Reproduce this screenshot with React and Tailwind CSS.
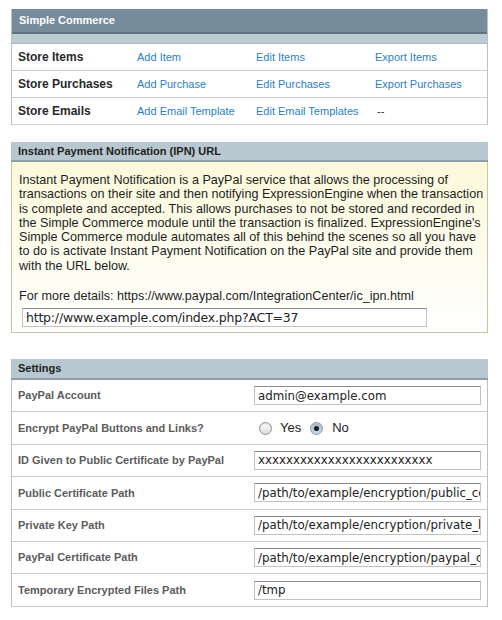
import React from 'react';

const storeRows = [
    { label: 'Store Items', links: ['Add Item', 'Edit Items', 'Export Items'] },
    { label: 'Store Purchases', links: ['Add Purchase', 'Edit Purchases', 'Export Purchases'] },
    { label: 'Store Emails', links: ['Add Email Template', 'Edit Email Templates', null] },
];

const settings = [
    { label: 'PayPal Account', value: 'admin@example.com' },
    { label: 'Encrypt PayPal Buttons and Links?', radio: true },
    { label: 'ID Given to Public Certificate by PayPal', value: 'xxxxxxxxxxxxxxxxxxxxxxxxx' },
    { label: 'Public Certificate Path', value: '/path/to/example/encryption/public_certificate.pem' },
    { label: 'Private Key Path', value: '/path/to/example/encryption/private_key.pem' },
    { label: 'PayPal Certificate Path', value: '/path/to/example/encryption/paypal_certificate.pem' },
    { label: 'Temporary Encrypted Files Path', value: '/tmp' },
];

const TextBox = ({ value, className = '' }) => (
    <input
        type="text"
        readOnly
        value={value}
        className={`block h-[19px] bg-white border border-[#c2c2c2] border-t-[#8c8c8c] pl-[3px] pr-0 py-0 outline-none text-[#222] font-['DejaVu_Sans',sans-serif] ${className}`}
    />
);

const Radio = ({ checked }) => (
    <span className="relative inline-flex items-center justify-center w-[13px] h-[13px] rounded-full border border-[#8e8e8e] bg-gradient-to-b from-[#ffffff] to-[#dcdcdc] shadow-[inset_0_1px_1px_rgba(0,0,0,0.15)]">
        {checked && (
            <span className="absolute inset-0 rounded-full bg-gradient-to-b from-[#9fb6d0] to-[#c9d8ea] flex items-center justify-center">
                <span className="w-[5px] h-[5px] rounded-full bg-[#1c1c1c]" />
            </span>
        )}
    </span>
);

const App = () => {
    return (
        <div className="w-[502px] h-[620px] bg-white pt-[9px] font-['Liberation_Sans',Arial,sans-serif]">
            <div className="ml-[11px] w-[477px]">
                {/* Simple Commerce */}
                <div className="border-l border-r border-[#b9c0ca]">
                    <div className="h-[25px] bg-[#768c9b] border-b-2 border-[#5e7484] pl-[7px] flex items-center text-white font-bold text-[11px]">
                        Simple Commerce
                    </div>
                    <div className="h-[10px] bg-[#bccad2] border-b border-[#a9b8c1]" />
                    {storeRows.map((row) => (
                        <div key={row.label} className="h-[27px] grid grid-cols-[119px_119px_119px_1fr] items-center border-b border-[#c9ced8] pl-[6px]">
                            <div className="font-bold text-[12px] text-[#2a2a2a]">{row.label}</div>
                            {row.links.map((link, i) => (
                                <div key={i} className="text-[11px]">
                                    {link ? <a className="text-[#2a7fc6]">{link}</a> : <span className="text-[#333] pl-[2px]">--</span>}
                                </div>
                            ))}
                        </div>
                    ))}
                </div>

                {/* IPN */}
                <div className="mt-[17px]">
                    <div className="h-[20px] bg-[#b9c8d0] border-b-2 border-[#8e9fa9] pl-[7px] flex items-center font-bold text-[11px] text-[#1e1e1e]">
                        Instant Payment Notification (IPN) URL
                    </div>
                    <div className="h-[171px] border border-t-0 border-[#c9c5a2] bg-gradient-to-b from-[#fbf9da] to-[#ffffff] pl-[7px] pt-[11px]">
                        <p className="text-[12.6px] leading-[14.3px] text-[#1e1e1e]">
                            Instant Payment Notification is a PayPal service that allows the processing of<br />
                            transactions on their site and then notifying ExpressionEngine when the transaction<br />
                            is complete and accepted. This allows purchases to not be stored and recorded in<br />
                            the Simple Commerce module until the transaction is finalized. ExpressionEngine's<br />
                            Simple Commerce module automates all of this behind the scenes so all you have<br />
                            to do is activate Instant Payment Notification on the PayPal site and provide them<br />
                            with the URL below.
                        </p>
                        <p className="mt-[16px] text-[12.6px] leading-[14.3px] text-[#1e1e1e]">
                            For more details: https://www.paypal.com/IntegrationCenter/ic_ipn.html
                        </p>
                        <TextBox value="http://www.example.com/index.php?ACT=37" className="mt-[5px] ml-[3px] w-[405px] text-[12.5px] tracking-[-0.2px]" />
                    </div>
                </div>

                {/* Settings */}
                <div className="mt-[26px]">
                    <div className="h-[21px] bg-[#b9c8d0] border-b-2 border-[#8e9fa9] pl-[7px] flex items-center font-bold text-[11px] text-[#1e1e1e]">
                        Settings
                    </div>
                    <div className="border-l border-r border-[#b9c0ca]">
                        {settings.map((s) => (
                            <div key={s.label} className="h-[32.4px] flex items-center border-b border-[#c5ccd6] pl-[6px]">
                                <div className="w-[236px] font-bold text-[11px] text-[#5c5c5c]">{s.label}</div>
                                {s.radio ? (
                                    <div className="flex items-center text-[13px] text-[#222] pl-[5px]">
                                        <Radio />
                                        <span className="ml-[8px] mr-[9px]">Yes</span>
                                        <Radio checked />
                                        <span className="ml-[9px]">No</span>
                                    </div>
                                ) : (
                                    <TextBox value={s.value} className="w-[227px] text-[11.8px]" />
                                )}
                            </div>
                        ))}
                    </div>
                </div>
            </div>
        </div>
    );
};

export default App;
